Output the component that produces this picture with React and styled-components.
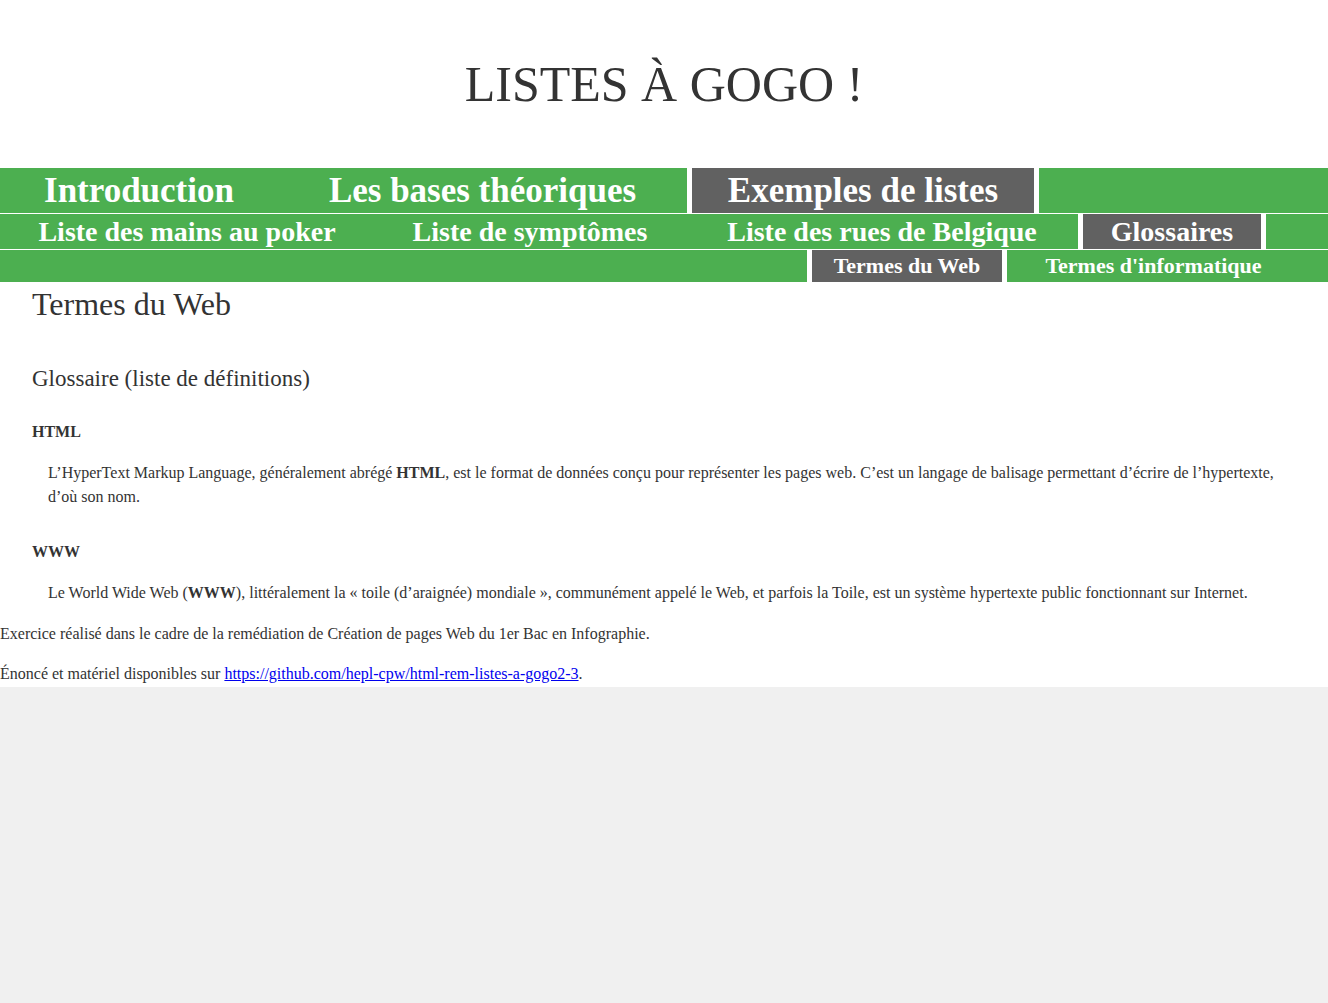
import React from "react";
import styled, { createGlobalStyle } from "styled-components";

const GlobalStyle = createGlobalStyle`
  html {
    background: #f0f0f0;
  }
  body {
    margin: 0;
    background: #fff;
    color: #333;
    font-family: "Liberation Serif", "DejaVu Serif", serif;
  }
`;

const Header = styled.header`
  padding: 59px 0;
  text-align: center;

  h1 {
    margin: 0;
    font-size: 50px;
    line-height: 50px;
    font-weight: 400;
    color: #333;
  }
`;

const NavRow = styled.ul`
  display: flex;
  justify-content: ${(p) => (p.$end ? "flex-end" : "flex-start")};
  height: ${(p) => p.$h}px;
  margin: 0;
  padding: 0 ${(p) => (p.$end ? 28 : 0)}px 0 0;
  list-style: none;
  background: #4caf50;
  border-bottom: ${(p) => (p.$last ? "none" : "1px solid #fff")};
  box-sizing: content-box;
`;

const NavItem = styled.li`
  display: flex;
  align-items: center;
  justify-content: center;
  flex: 0 0 ${(p) => p.$w}px;
  box-sizing: border-box;
  background: ${(p) => (p.$active ? "#616161" : "transparent")};
  border-left: ${(p) => (p.$active ? "5px solid #fff" : "none")};
  border-right: ${(p) => (p.$active ? "5px solid #fff" : "none")};
  color: #fff;
  font-weight: 700;
  font-size: ${(p) => p.$size}px;
  white-space: nowrap;
  cursor: pointer;
`;

const Main = styled.main`
  padding: 0 32px;

  h2 {
    margin: 4px 0 0;
    font-size: 32px;
    line-height: 36px;
    font-weight: 400;
  }

  h3 {
    margin: 43px 0 0;
    font-size: 23px;
    line-height: 28px;
    font-weight: 400;
  }
`;

const Glossary = styled.dl`
  margin: 0;
`;

const Term = styled.dt`
  margin-top: ${(p) => p.$gap}px;
  font-size: 16px;
  line-height: 20px;
  font-weight: 700;
`;

const Definition = styled.dd`
  margin: 19px 0 0 16px;
  font-size: 16px;
  line-height: 24px;

  strong {
    font-weight: 700;
  }
`;

const Footer = styled.footer`
  margin-top: 17px;
  padding-bottom: 1px;

  p {
    margin: 0;
    font-size: 16px;
    line-height: 24px;
  }

  p + p {
    margin-top: 16px;
  }

  a {
    color: #0000ee;
  }
`;

const App = () => {
  return (
    <>
      <GlobalStyle />
      <Header>
        <h1>LISTES À GOGO !</h1>
      </Header>

      <nav>
        <NavRow $h={45}>
          <NavItem $w={278} $size={35}>Introduction</NavItem>
          <NavItem $w={409} $size={35}>Les bases théoriques</NavItem>
          <NavItem $w={352} $size={35} $active>
            Exemples de listes
          </NavItem>
        </NavRow>
        <NavRow $h={35}>
          <NavItem $w={374} $size={28}>Liste des mains au poker</NavItem>
          <NavItem $w={312} $size={28}>Liste de symptômes</NavItem>
          <NavItem $w={392} $size={28}>Liste des rues de Belgique</NavItem>
          <NavItem $w={188} $size={28} $active>
            Glossaires
          </NavItem>
        </NavRow>
        <NavRow $h={32} $end $last>
          <NavItem $w={200} $size={22} $active>
            Termes du Web
          </NavItem>
          <NavItem $w={293} $size={22}>Termes d'informatique</NavItem>
        </NavRow>
      </nav>

      <Main>
        <h2>Termes du Web</h2>
        <h3>Glossaire (liste de définitions)</h3>
        <Glossary>
          <Term $gap={29}>HTML</Term>
          <Definition>
            L’HyperText Markup Language, généralement abrégé <strong>HTML</strong>, est le format de
            données conçu pour représenter les pages web. C’est un langage de balisage permettant
            d’écrire de l’hypertexte, d’où son nom.
          </Definition>
          <Term $gap={33}>WWW</Term>
          <Definition>
            Le World Wide Web (<strong>WWW</strong>), littéralement la « toile (d’araignée) mondiale
            », communément appelé le Web, et parfois la Toile, est un système hypertexte public
            fonctionnant sur Internet.
          </Definition>
        </Glossary>
      </Main>

      <Footer>
        <p>
          Exercice réalisé dans le cadre de la remédiation de Création de pages Web du 1er Bac en
          Infographie.
        </p>
        <p>
          Énoncé et matériel disponibles sur{" "}
          <a href="https://github.com/hepl-cpw/html-rem-listes-a-gogo2-3">
            https://github.com/hepl-cpw/html-rem-listes-a-gogo2-3
          </a>
          .
        </p>
      </Footer>
    </>
  );
};

export default App;
